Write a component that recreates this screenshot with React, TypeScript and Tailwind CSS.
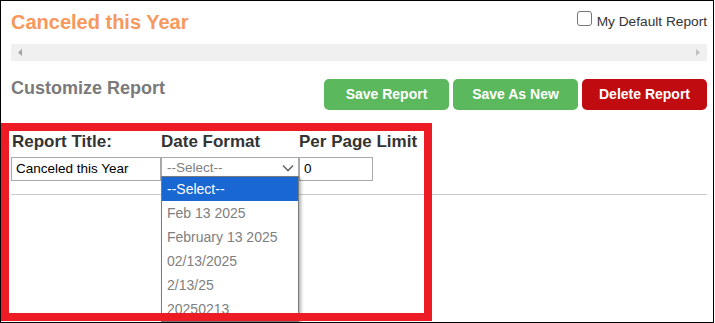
import React from "react";

const options = ["--Select--", "Feb 13 2025", "February 13 2025", "02/13/2025", "2/13/25", "20250213"];

export default function App() {
  return (
    <div className="relative w-[714px] h-[323px] border border-black overflow-hidden bg-white font-['Liberation_Sans',Arial,sans-serif]">
      <div className="pl-[10px] pr-[6px] pt-[9px]">
        <div className="flex justify-between items-start">
          <h1 className="text-[20px] leading-[24px] font-bold text-[#f7985c]">Canceled this Year</h1>
          <label className="flex items-start mt-[1px]">
            <span className="w-[15px] h-[15px] border border-[#767676] rounded-[3px] bg-white" />
            <span className="ml-[5px] mt-[1px] text-[13.7px] leading-[20px] text-[#333]">My Default Report</span>
          </label>
        </div>

        <div className="mt-[10px] h-[17px] bg-[#f0f0f0] flex items-center justify-between px-[7px]">
          <svg width="4" height="7" viewBox="0 0 4 7">
            <polygon points="4,0 4,7 0,3.5" fill="#a3a3a3" />
          </svg>
          <svg width="4" height="7" viewBox="0 0 4 7">
            <polygon points="0,0 0,7 4,3.5" fill="#c2c2c2" />
          </svg>
        </div>

        <div className="mt-[16px] flex justify-between items-start">
          <h2 className="text-[18px] leading-[22px] font-bold text-[#7a7a7a]">Customize Report</h2>
          <div className="flex gap-[4px] mt-[2px]">
            <button className="w-[125px] h-[31px] rounded-[5px] bg-[#5cb85c] text-white text-[14px] font-bold">Save Report</button>
            <button className="w-[125px] h-[31px] rounded-[5px] bg-[#5cb85c] text-white text-[14px] font-bold">Save As New</button>
            <button className="w-[125px] h-[31px] rounded-[5px] bg-[#c00b10] text-white text-[14px] font-bold">Delete Report</button>
          </div>
        </div>

        <div className="mt-[22px] flex">
          <div className="w-[150px]">
            <div className="pl-[1px] text-[17px] leading-[20px] font-bold text-[#333] whitespace-nowrap">Report Title:</div>
            <div className="mt-[5px] h-[24px] border border-[#a9a9a9] px-[4px] text-[13.5px] leading-[22px] text-black whitespace-nowrap overflow-hidden">Canceled this Year</div>
          </div>
          <div className="w-[138px]">
            <div className="text-[17px] leading-[20px] font-bold text-[#333] whitespace-nowrap">Date Format</div>
            <div className="mt-[5px] h-[24px] border border-[#a9a9a9] pl-[5px] pr-[4px] flex items-start justify-between">
              <span className="text-[13.5px] leading-[19px] text-[#808080]">--Select--</span>
              <svg width="12" height="8" viewBox="0 0 12 8" className="mt-[6px]">
                <polyline points="1,1.5 6,6.5 11,1.5" fill="none" stroke="#6b6b6b" strokeWidth="1.6" />
              </svg>
            </div>
          </div>
          <div className="w-[74px]">
            <div className="text-[17px] leading-[20px] font-bold text-[#333] whitespace-nowrap">Per Page Limit</div>
            <div className="mt-[5px] h-[24px] border border-[#a9a9a9] px-[4px] text-[13.5px] leading-[22px] text-black">0</div>
          </div>
        </div>

        <div className="mt-[13px] border-t border-[#cccccc]" />
      </div>

      <div className="absolute left-[160px] top-[175px] w-[138px] border border-[#7a7a7a] bg-white shadow-[2px_2px_3px_rgba(0,0,0,0.3)]">
        {options.map((o, i) => (
          <div
            key={o}
            className={
              i === 0
                ? "h-[24px] leading-[24px] pl-[5px] text-[14px] bg-[#1967d2] text-white"
                : "h-[24px] leading-[24px] pl-[5px] text-[14px] text-[#808080]"
            }
          >
            {o}
          </div>
        ))}
      </div>

      <div className="absolute left-0 top-[122px] w-[431px] h-[198px] border-[8px] border-[#ed1c24] pointer-events-none" />
    </div>
  );
}
